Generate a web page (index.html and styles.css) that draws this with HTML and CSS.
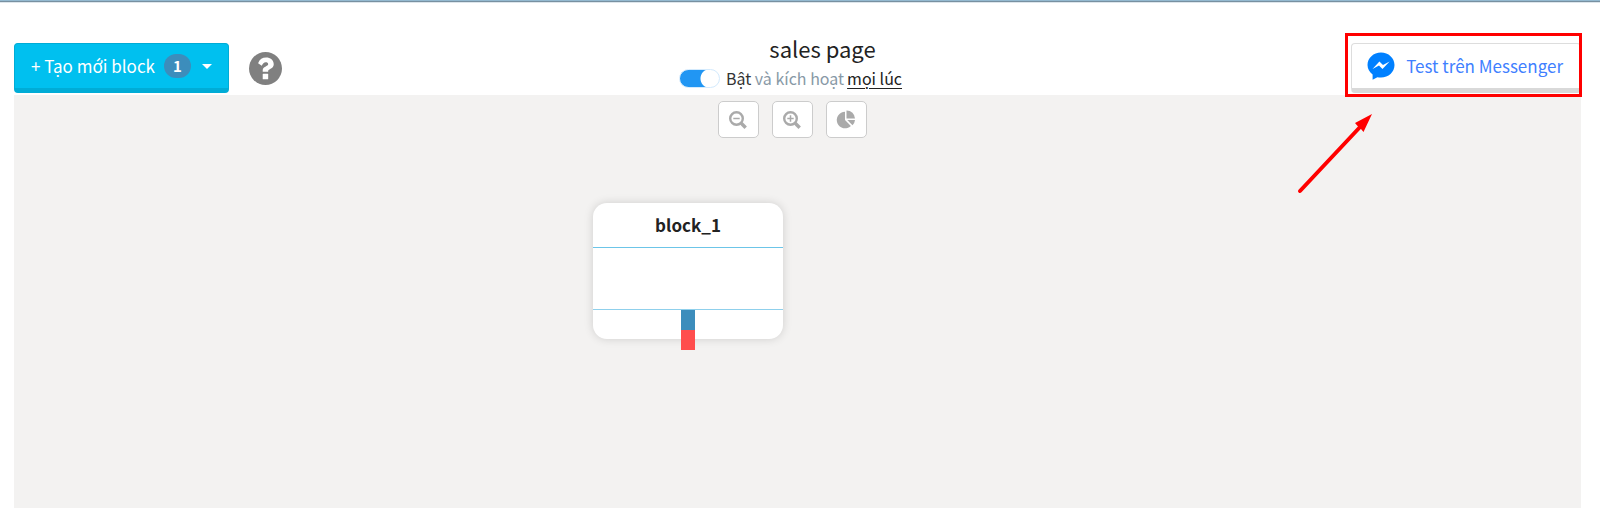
FILE: index.html
```html
<!DOCTYPE html>
<html lang="vi">
<head>
    <meta charset="UTF-8">
    <meta name="viewport" content="width=device-width, initial-scale=1.0">
    <title>sales page</title>
    <link rel="stylesheet" href="styles.css">
</head>
<body>

    <div class="page">
        <header class="toolbar">
            <div class="toolbar-left">
                <button type="button" class="btn btn-create">
                    <span>+ Tạo mới block</span>
                    <span class="badge">1</span>
                    <span class="caret"></span>
                </button>
                <button type="button" class="btn-help" aria-label="Trợ giúp">
                    <svg width="33" height="33" viewBox="0 0 32 32">
                        <circle cx="16" cy="16" r="16" fill="#808080"/>
                        <path d="M8.800 10.800C10.400 7 13 5.400 16.600 5.400C20.700 5.400 24 8 24 11.800C24 16.400 18.600 16.200 18.600 18.400V19.200H13.300V17.800C13.300 13.800 18.600 14 18.600 11.800C18.600 10.600 17.500 10 16.200 10C14.500 10 13.400 11.200 12.400 13.300Z" fill="#fff"/>
                        <rect x="13.300" y="21.200" width="5.300" height="5.300" rx="0.500" fill="#fff"/>
                    </svg>
                </button>
            </div>

            <div class="toolbar-center">
                <h1 class="title">sales page</h1>
                <div class="status">
                    <input type="checkbox" class="switch" id="active" checked>
                    <label for="active"><b>Bật</b> và kích hoạt</label>
                    <a href="#" class="status-link">mọi lúc</a>
                </div>
            </div>

            <div class="toolbar-right">
                <button type="button" class="btn btn-test">
                    <svg width="28" height="28" viewBox="0 0 28 28">
                        <path d="M14 0.500C6.500 0.500 0.500 6 0.500 13C0.500 16.800 2.500 20.200 5.600 22.500V27.800L10.400 25.200C11.500 25.500 12.700 25.600 14 25.600C21.500 25.600 27.500 20 27.500 13C27.500 6 21.500 0.500 14 0.500Z" fill="#0080ff"/>
                        <path d="M5.500 17L12.400 9.600L16 13L22.600 9.600L15.500 17L12 13.600Z" fill="#fff"/>
                    </svg>
                    <span>Test trên Messenger</span>
                </button>
                <div class="highlight"></div>
            </div>
        </header>

        <main class="canvas">
            <div class="zoom-bar">
                <button type="button" class="btn-tool" aria-label="Thu nhỏ">
                    <svg width="18" height="18" viewBox="0 0 18 18" fill="none" stroke="#aaa">
                        <circle cx="7.500" cy="7.500" r="6.300" stroke-width="2.400"/>
                        <path d="M12 12L16.700 16.700" stroke-width="3.400"/>
                        <path d="M4.300 7.500H10.700" stroke-width="1.500"/>
                    </svg>
                </button>
                <button type="button" class="btn-tool" aria-label="Phóng to">
                    <svg width="18" height="18" viewBox="0 0 18 18" fill="none" stroke="#aaa">
                        <circle cx="7.500" cy="7.500" r="6.300" stroke-width="2.400"/>
                        <path d="M12 12L16.700 16.700" stroke-width="3.400"/>
                        <path d="M4.300 7.500H10.700M7.500 4.300V10.700" stroke-width="1.500"/>
                    </svg>
                </button>
                <button type="button" class="btn-tool" aria-label="Thống kê">
                    <svg width="20" height="20" viewBox="0 0 20 20" fill="#aaa">
                        <path d="M9 1.700A8.300 8.300 0 1 0 14.900 15.900L9 10Z"/>
                        <path d="M10.500 0.500A8.300 8.300 0 0 1 19 8.600H10.500Z"/>
                        <path d="M11.300 10H19A8.300 8.300 0 0 1 16.500 15.200Z"/>
                    </svg>
                </button>
            </div>

            <div class="node">
                <div class="node-title">block_1</div>
                <div class="node-body"></div>
                <div class="node-footer">
                    <div class="port">
                        <div class="port-out"></div>
                        <div class="port-remove"></div>
                    </div>
                </div>
            </div>

            <svg class="arrow" width="80" height="84" viewBox="0 0 80 84">
                <path d="M5 77L66 12" stroke="#f00" stroke-width="4" stroke-linecap="round"/>
                <path d="M77 0L60 9L63 12.500L66 15L68.500 18Z" fill="#f00"/>
            </svg>
        </main>
    </div>

</body>
</html>
```
FILE: styles.css
```css
* {
    box-sizing: border-box;
}
body {
    margin: 0;
    background: #fff;
    color: #222;
    font-family: "Noto Sans CJK SC", "Noto Sans", sans-serif;
    font-size: 17px;
    line-height: 24px;
}
button {
    font: inherit;
    cursor: pointer;
}
.page {
    display: flex;
    flex-direction: column;
    min-height: 100vh;
    padding: 0 19px 0 14px;
    border-top: 1px solid #93b9d0;
    box-shadow: inset 0 1px #7890a0, inset 0 2px #dde6ec;
}
.toolbar {
    display: grid;
    grid-template-columns: 1fr auto 1fr;
    padding-top: 33px;
    height: 94px;
}
.toolbar-left {
    display: flex;
    align-items: flex-start;
    gap: 20px;
    padding-top: 9px;
}
.btn {
    display: flex;
    align-items: center;
    height: 50px;
    border-radius: 4px;
}
.btn-create {
    gap: 9px;
    padding: 0 16px;
    border: 1px solid #00acd6;
    border-bottom-width: 5px;
    background: #00c0ef;
    color: #fff;
}
.badge {
    width: 27px;
    border-radius: 12px;
    background: #3c8dbc;
    font-size: 15px;
    font-weight: bold;
    text-align: center;
}
.caret {
    margin-left: 2px;
    border-top: 5px solid #fff;
    border-left: 5px solid transparent;
    border-right: 5px solid transparent;
}
.btn-help {
    display: flex;
    margin-top: 9px;
    padding: 0;
    border: 0;
    background: none;
}
.toolbar-center {
    padding-right: 14px;
}
.title {
    margin: 0;
    padding-left: 64px;
    font-size: 22px;
    font-weight: normal;
    line-height: 28px;
    text-align: center;
}
.status {
    display: flex;
    align-items: center;
    gap: 3px;
    color: #8899a6;
    font-size: 16px;
    line-height: 32px;
}
.status b {
    color: #333;
    font-weight: normal;
}
.status-link {
    color: #222;
    text-underline-offset: 3px;
}
.switch {
    appearance: none;
    width: 41px;
    height: 19px;
    margin: 0 3px 0 0;
    border: 1px solid #2196f3;
    border-radius: 10px;
    background: #ccc;
    cursor: pointer;
}
.switch:checked {
    border-color: #d3eafd;
    background: radial-gradient(circle at 30px 50%, #fff 9px, transparent 10px), linear-gradient(to right, #2196f3 30px, #fff 30px) border-box;
}
.toolbar-right {
    position: relative;
    display: flex;
    justify-content: flex-end;
    align-items: flex-start;
    padding-top: 9px;
}
.btn-test {
    gap: 11px;
    padding: 0 17px 0 15px;
    border: 1px solid #ddd;
    border-bottom: 5px solid #d9d9d9;
    background: #fff;
    color: #4080ff;
}
/* red frame around the test button */
.highlight {
    position: absolute;
    z-index: 1;
    top: -1px;
    right: -1px;
    width: 237px;
    height: 64px;
    border: 3px solid #f00;
    pointer-events: none;
}
.canvas {
    position: relative;
    flex: 1;
    background: #f3f2f1;
}
.zoom-bar {
    display: flex;
    justify-content: center;
    gap: 13px;
    padding: 6px 11px 0 0;
}
.btn-tool {
    display: flex;
    align-items: center;
    justify-content: center;
    width: 41px;
    height: 37px;
    padding: 0;
    border: 1px solid #ccc;
    border-radius: 5px;
    background: #fff;
}
.node {
    position: absolute;
    left: 579px;
    top: 108px;
    width: 190px;
    border-radius: 14px;
    background: #fff;
    box-shadow: 0 0 10px rgba(0, 0, 0, 0.15);
}
.node-title {
    padding: 10px 0;
    border-bottom: 1px solid #6cc5e8;
    font-weight: bold;
    text-align: center;
}
.node-body {
    height: 62px;
    border-bottom: 1px solid #8fd0ec;
}
.node-footer {
    display: flex;
    justify-content: center;
    height: 29px;
}
.port {
    width: 14px;
}
.port-out {
    height: 20px;
    background: #3c8dbc;
}
.port-remove {
    height: 20px;
    background: #ff4d4d;
}
.arrow {
    position: absolute;
    right: 206px;
    top: 19px;
}
```
